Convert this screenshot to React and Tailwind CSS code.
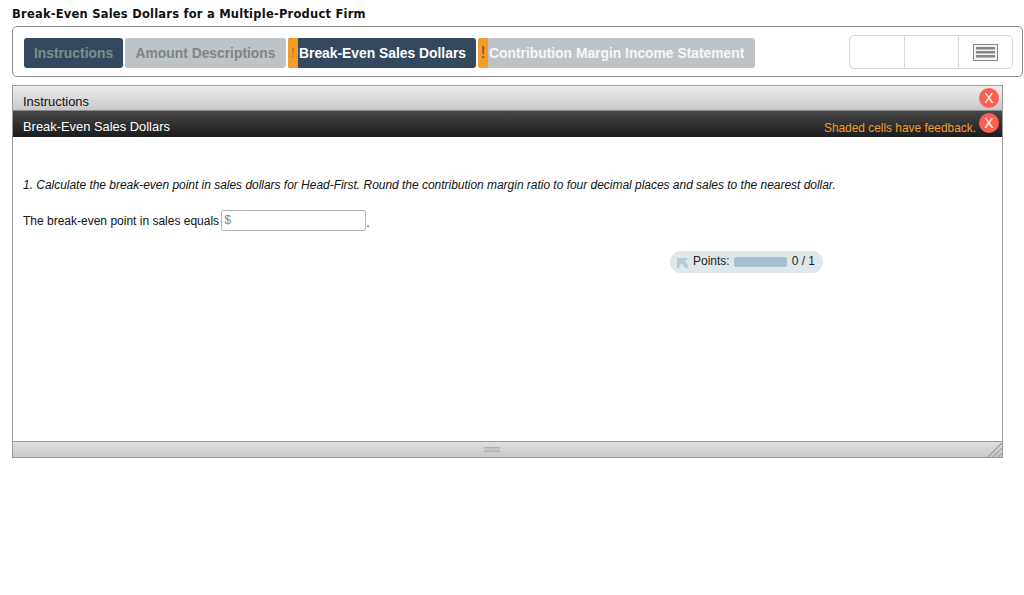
const sans = { fontFamily: '"Liberation Sans", Arial, sans-serif' };

const Tab = ({ label, flag, dark, textClass, flagClass, width }) => (
  <div className={`flex h-[30px] ${width} overflow-hidden rounded-[3px] ${dark ? 'bg-[#34495e]' : 'bg-[#bdc3c7]'}`}>
    {flag && (
      <div className={`flex w-[10px] shrink-0 items-center justify-center bg-[#f39c27] font-light ${flagClass}`}>!</div>
    )}
    <div className={`flex flex-1 items-center ${flag ? 'pl-px' : 'justify-center'} text-[13.85px] font-bold ${textClass}`}>
      {label}
    </div>
  </div>
);

const CloseButton = ({ className }) => (
  <div className={`absolute right-[3px] flex h-5 w-5 items-center justify-center rounded-full bg-[#fb5f52] text-[14px] text-white ${className}`}>
    X
  </div>
);

export default function App() {
  return (
    <div className="min-h-[595px] bg-white pl-3 pr-px pt-[7px] text-black" style={sans}>
      <h1 className="h-[19px] text-[11.5px] leading-[15px] font-bold tracking-[0.22px] text-[#111]" style={{ fontFamily: '"DejaVu Sans", Verdana, sans-serif' }}>
        Break-Even Sales Dollars for a Multiple-Product Firm
      </h1>

      {/* Tabs and tools */}
      <div className="flex h-[51px] items-start justify-between rounded-[5px] border border-[#8a8a8a] pr-[9px] pl-[11px]">
        <div className="mt-[11px] flex gap-[2px]">
          <Tab label="Instructions" dark width="w-[99px]" textClass="text-[#7f8c8d]" />
          <Tab label="Amount Descriptions" width="w-[161px]" textClass="text-[#7f8587]" />
          <Tab label="Break-Even Sales Dollars" flag dark width="w-[188px]" textClass="text-white" flagClass="text-[12px] text-[#a8782f]" />
          <Tab label="Contribution Margin Income Statement" flag width="w-[277px]" textClass="text-[#f4f6f6]" flagClass="text-[16px] text-[#555]" />
        </div>
        <div className="mt-2 flex h-[34px] w-[164px] rounded-[5px] border border-[#d9d9d9]">
          <div className="w-[55px] border-r border-[#d9d9d9]" />
          <div className="w-[54px] border-r border-[#d9d9d9]" />
          <div className="flex flex-1 items-center justify-center">
            <svg width="25" height="17" viewBox="0 0 25 17">
              <rect x="0.5" y="0.5" width="24" height="16" fill="#f4f4f4" stroke="#858585" />
              <rect x="3" y="3" width="19" height="2.5" fill="#858585" />
              <rect x="3" y="7" width="19" height="2.5" fill="#858585" />
              <rect x="3" y="11" width="19" height="2.5" fill="#858585" />
            </svg>
          </div>
        </div>
      </div>

      {/* Panel */}
      <div className="relative mt-2 flex h-[373px] w-[991px] flex-col border border-[#999]">
        <div className="flex h-[24px] items-end bg-gradient-to-b from-[#eeeeee] to-[#c8c8c8] pl-[10px] text-[12.9px] leading-[16px] text-[#111]">
          Instructions
        </div>
        <div className="flex h-[27px] items-center justify-between border-t border-[#8a8a8a] bg-gradient-to-b from-[#484848] to-[#1c1c1c] pr-[26px] pl-[10px] text-white">
          <span className="pt-[6px] text-[12.9px]">Break-Even Sales Dollars</span>
          <span className="pt-[9px] text-[11.9px] text-[#f39c27]">Shaded cells have feedback.</span>
        </div>
        <CloseButton className="top-[2px]" />
        <CloseButton className="top-[27px]" />

        <div className="flex-1 bg-white px-[10px]">
          <p className="mt-[41px] text-[12px] leading-[14px] tracking-[-0.025px] text-[#111] italic">
            1. Calculate the break-even point in sales dollars for Head-First. Round the contribution margin ratio to four decimal places and sales to the nearest dollar.
          </p>
          <div className="mt-[18px] flex items-center text-[12px] text-[#111]">
            <span>The break-even point in sales equals</span>
            <div className="ml-[2px] flex h-[21px] w-[145px] items-center rounded-[2px] border border-[#b5b5b5] pl-[2px] text-[12.5px] text-[#8a8a8a]">$</div>
            <span className="self-end leading-[16px]">.</span>
          </div>
          <div className="mt-[20px] ml-[647px] flex h-[22px] w-[153px] items-center rounded-[11px] bg-[#dfe7eb] pb-[2px] pl-[7px] text-[12px] text-[#222]">
            <svg width="11" height="10" viewBox="0 0 11 10" className="mt-[3px]">
              <path d="M0 0H11L7.5 3.5 11 7V10H8.5L4.5 5.5 2.5 7.5V10H0Z" fill="#b5cbd8" />
            </svg>
            <span className="ml-[5px]">Points:</span>
            <div className="mt-[2px] ml-[4px] h-[10px] w-[53px] rounded-[2px] bg-[#a8c1d1]" />
            <span className="ml-[5px]">0 / 1</span>
          </div>
        </div>

        <div className="relative flex h-[16px] items-center border-t border-[#999] bg-gradient-to-b from-[#dedede] to-[#c9c9c9] pl-[471px]">
          <div className="h-[5px] w-[16px] border-y border-[#b0b0b0] bg-[#c4c4c4]" />
          <svg width="14" height="14" viewBox="0 0 14 14" className="absolute right-0 bottom-0">
            <path d="M0 14L14 0M5 14L14 5M10 14L14 10" stroke="#a5a5a5" strokeWidth="1.5" />
          </svg>
        </div>
      </div>
    </div>
  );
}
